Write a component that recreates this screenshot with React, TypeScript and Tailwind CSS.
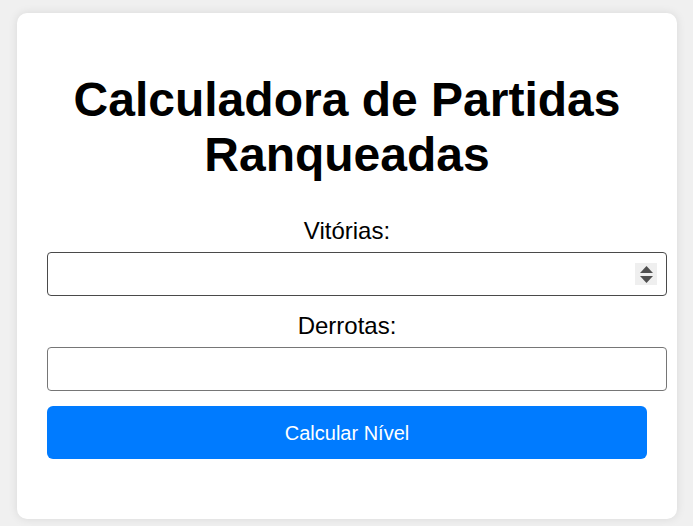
import { useState } from "react";

function Spinner() {
  return (
    <div
      className="pointer-events-none absolute right-[10px] top-1/2 flex h-[22px] w-[22px] -translate-y-1/2 flex-col items-center justify-center gap-[3px] bg-[#efefef]"
      aria-hidden
    >
      <svg width="13" height="7" viewBox="0 0 13 7">
        <path d="M6.5 0 L13 7 L0 7 Z" fill="#505050" />
      </svg>
      <svg width="13" height="7" viewBox="0 0 13 7">
        <path d="M0 0 L13 0 L6.5 7 Z" fill="#505050" />
      </svg>
    </div>
  );
}

export default function App() {
  const [wins, setWins] = useState("");
  const [losses, setLosses] = useState("");

  return (
    <div
      className="min-h-[526px] bg-[#f0f0f0] px-[17px] pt-[13px]"
      style={{ fontFamily: '"Liberation Sans", Arial, sans-serif' }}
    >
      <div className="h-[506px] w-[660px] rounded-[10px] bg-white px-[30px] pt-[59px] text-center shadow-[0_0_10px_rgba(0,0,0,0.1)]">
        <h1 className="text-[48px] font-bold leading-[55px] text-black">
          Calculadora de Partidas Ranqueadas
        </h1>

        <label htmlFor="vitorias" className="mt-[35px] block text-[24px] leading-[28px] text-black">
          Vitórias:
        </label>
        <div className="relative mt-[7px] w-[calc(100%+20px)]">
          <input
            id="vitorias"
            type="text"
            inputMode="numeric"
            value={wins}
            onChange={(e) => setWins(e.target.value)}
            className="block h-[44px] w-full rounded-[4px] border border-[#4a4a4a] bg-white px-[10px] text-[18px] text-black outline-none"
          />
          <Spinner />
        </div>

        <label htmlFor="derrotas" className="mt-[16px] block text-[24px] leading-[28px] text-black">
          Derrotas:
        </label>
        <input
          id="derrotas"
          type="text"
          inputMode="numeric"
          value={losses}
          onChange={(e) => setLosses(e.target.value)}
          className="mt-[7px] block h-[44px] w-[calc(100%+20px)] rounded-[4px] border border-[#767676] bg-white px-[10px] text-[18px] text-black outline-none"
        />

        <button
          type="button"
          className="mt-[15px] block h-[53px] w-full rounded-[6px] bg-[#007bff] text-[20px] text-white"
        >
          Calcular Nível
        </button>
      </div>
    </div>
  );
}
